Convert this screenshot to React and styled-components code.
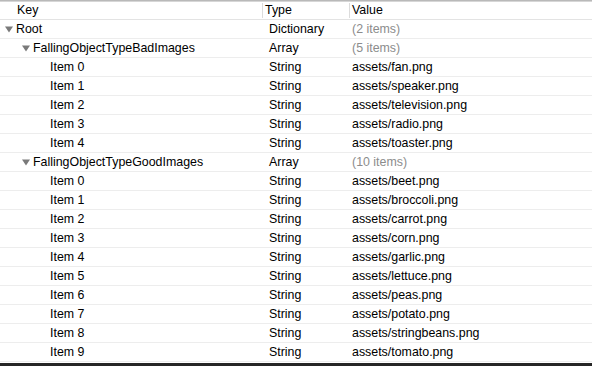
import React from 'react'
import styled, { createGlobalStyle } from 'styled-components'

const GlobalStyle = createGlobalStyle`
  html, body {
    margin: 0;
    padding: 0;
    background: #ffffff;
  }
  body {
    font-family: "Liberation Sans", Arial, sans-serif;
    font-size: 12.4px;
    color: #000;
  }
`

const bad = ['fan', 'speaker', 'television', 'radio', 'toaster']
const good = ['beet', 'broccoli', 'carrot', 'corn', 'garlic', 'lettuce', 'peas', 'potato', 'stringbeans', 'tomato']

const rows = [
  { key: 'Root', type: 'Dictionary', value: '(2 items)', depth: 0, open: true, muted: true },
  { key: 'FallingObjectTypeBadImages', type: 'Array', value: '(5 items)', depth: 1, open: true, muted: true },
  ...bad.map((name, i) => ({ key: `Item ${i}`, type: 'String', value: `assets/${name}.png`, depth: 2 })),
  { key: 'FallingObjectTypeGoodImages', type: 'Array', value: '(10 items)', depth: 1, open: true, muted: true },
  ...good.map((name, i) => ({ key: `Item ${i}`, type: 'String', value: `assets/${name}.png`, depth: 2 })),
]

const Window = styled.div`
  width: 592px;
  height: 366px;
  display: flex;
  flex-direction: column;
  border-top: 1px solid #b9b9b9;
  box-sizing: border-box;
  overflow: hidden;
`

const Header = styled.div`
  display: grid;
  grid-template-columns: 262px 87px 1fr;
  height: 17px;
  border-top: 1px solid #d6d6d6;
  border-bottom: 1px solid #e3e3e3;
  line-height: 17px;
`

const HeadCell = styled.div`
  padding-left: ${p => p.$pad}px;
  border-left: ${p => (p.$sep ? '1px solid #dcdcdc' : 'none')};
  margin: 1px 0;
  line-height: 15px;
`

const Row = styled.div`
  display: grid;
  grid-template-columns: 262px 87px 1fr;
  height: 18px;
  line-height: 18px;
  border-bottom: 1px solid #ededed;
`

const KeyCell = styled.div`
  display: flex;
  align-items: center;
  padding-left: ${p => 5 + p.$depth * 17}px;
  white-space: nowrap;
`

const Toggle = styled.span`
  width: 11px;
  flex: none;
  display: flex;
  align-items: center;
`

const Spacer = styled.span`
  width: 11px;
  flex: none;
`

const TypeCell = styled.div`
  padding-left: 7px;
`

const ValueCell = styled.div`
  padding-left: 3px;
  color: ${p => (p.$muted ? '#8c8c8c' : '#000')};
  white-space: nowrap;
`

const Fill = styled.div`
  flex: 1;
`

const Bottom = styled.div`
  height: 3px;
  background: #262626;
`

const Triangle = () => (
  <svg width="8" height="7" viewBox="0 0 8 7">
    <path d="M0 0.5 L8 0.5 L4 6.5 Z" fill="#7a7a7a" />
  </svg>
)

export default function App() {
  return (
    <>
      <GlobalStyle />
      <Window>
        <Header>
          <HeadCell $pad={17}>Key</HeadCell>
          <HeadCell $pad={2} $sep>Type</HeadCell>
          <HeadCell $pad={2} $sep>Value</HeadCell>
        </Header>
        {rows.map((r, i) => (
          <Row key={i}>
            <KeyCell $depth={r.depth}>
              {r.open ? (
                <Toggle>
                  <Triangle />
                </Toggle>
              ) : (
                <Spacer />
              )}
              {r.key}
            </KeyCell>
            <TypeCell>{r.type}</TypeCell>
            <ValueCell $muted={r.muted}>{r.value}</ValueCell>
          </Row>
        ))}
        <Fill />
        <Bottom />
      </Window>
    </>
  )
}
